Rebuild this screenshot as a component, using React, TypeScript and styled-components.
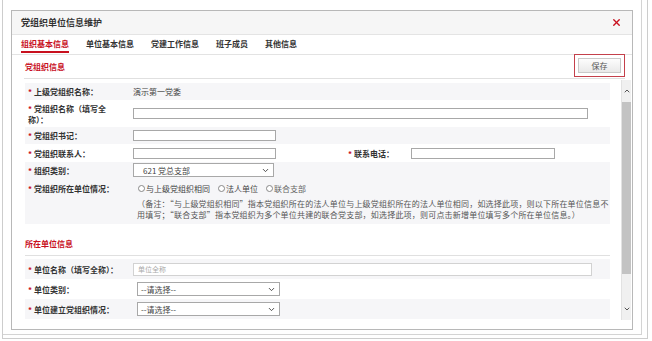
import React from 'react';
import styled, { createGlobalStyle } from 'styled-components';
import { ChevronDown, ChevronUp, X } from 'lucide-react';

const RED = '#c8101e';

const GlobalStyle = createGlobalStyle`
  html, body { margin: 0; padding: 0; background: #fff; }
  body { font-family: "Noto Sans CJK SC", "Noto Sans", sans-serif; color: #333; }
  * { box-sizing: border-box; }
`;

const tabs = ['组织基本信息', '单位基本信息', '党建工作信息', '班子成员', '其他信息'];

export default function App() {
  return (
    <>
      <GlobalStyle />
      <Page>
        <Frame>
          <Dialog>
            <TitleBar>
              <Title>党组织单位信息维护</Title>
              <X size={11} color={RED} strokeWidth={3} />
            </TitleBar>
            <Tabs>
              {tabs.map((t, i) => (
                <Tab key={t} $active={i === 0}>{t}</Tab>
              ))}
            </Tabs>
            <SectionBar>
              <SectionTitle>党组织信息</SectionTitle>
              <SaveFrame>
                <SaveButton>保存</SaveButton>
              </SaveFrame>
            </SectionBar>
            <Body>
              <FormArea>
                <Row $h={17} $shade>
                  <Label><Star>*</Star>上级党组织名称：</Label>
                  <Value>演示第一党委</Value>
                </Row>
                <Row $h={27}>
                  <Label><Star>*</Star>党组织名称（填写全<br />称）：</Label>
                  <TextBox $w={455} />
                </Row>
                <Row $h={17} $shade>
                  <Label><Star>*</Star>党组织书记：</Label>
                  <TextBox $w={143} />
                </Row>
                <Row $h={18}>
                  <Label><Star>*</Star>党组织联系人：</Label>
                  <TextBox $w={143} />
                  <Label $w={66} $gap={69}><Star>*</Star>联系电话：</Label>
                  <TextBox $w={144} />
                </Row>
                <Row $h={16} $shade>
                  <Label><Star>*</Star>组织类别：</Label>
                  <Select $w={141} $pad={9}>
                    <span>621 党总支部</span>
                    <ChevronDown size={9} strokeWidth={2.5} />
                  </Select>
                </Row>
                <Block $shade>
                  <Row $h={20}>
                    <Label><Star>*</Star>党组织所在单位情况：</Label>
                    <Radios>
                      <Radio><Dot />与上级党组织相同</Radio>
                      <Radio><Dot />法人单位</Radio>
                      <Radio $dim><Dot />联合支部</Radio>
                    </Radios>
                  </Row>
                  <Note>
                    （备注：“与上级党组织相同”指本党组织所在的法人单位与上级党组织所在的法人单位相同，如选择此项，则以下所在单位信息不
                    <br />
                    用填写；“联合支部”指本党组织为多个单位共建的联合党支部，如选择此项，则可点击新增单位填写多个所在单位信息。）
                  </Note>
                </Block>
                <SubHeading>所在单位信息</SubHeading>
                <Row $h={20} $shade $top={3}>
                  <Label><Star>*</Star>单位名称（填写全称）：</Label>
                  <TextBox $w={459} $light placeholder="单位全称" />
                </Row>
                <Row $h={20}>
                  <Label><Star>*</Star>单位类别：</Label>
                  <Select $w={143} $pad={3} $gap={4}>
                    <span>--请选择--</span>
                    <ChevronDown size={9} strokeWidth={2.5} />
                  </Select>
                </Row>
                <Row $h={20} $shade>
                  <Label><Star>*</Star>单位建立党组织情况：</Label>
                  <Select $w={143} $pad={3} $gap={4}>
                    <span>--请选择--</span>
                    <ChevronDown size={9} strokeWidth={2.5} />
                  </Select>
                </Row>
              </FormArea>
              <ScrollBar>
                <Arrow><ChevronUp size={8} strokeWidth={3} /></Arrow>
                <Thumb />
                <Track />
                <Arrow><ChevronDown size={8} strokeWidth={3} /></Arrow>
              </ScrollBar>
            </Body>
          </Dialog>
        </Frame>
      </Page>
    </>
  );
}

const Page = styled.div`
  width: 646px;
  height: 340px;
  margin: -1px 0 0 2px;
  border: 1px solid #cdcdcd;
  border-top: none;
`;

const Frame = styled.div`
  width: 639px;
  height: 336px;
  border-right: 1px solid #d4d4d4;
  border-bottom: 1px solid #d4d4d4;
  padding: 11px 0 0 8px;
`;

const Dialog = styled.div`
  width: 622px;
  height: 320px;
  border: 1px solid #b8b8b8;
  background: #fff;
  display: flex;
  flex-direction: column;
`;

const TitleBar = styled.div`
  height: 24px;
  flex-shrink: 0;
  display: flex;
  align-items: center;
  justify-content: space-between;
  padding: 0 10px 0 9px;
  background: #f6f6f6;
  border-bottom: 1px solid #e4e4e4;
`;

const Title = styled.div`
  font-size: 9px;
  font-weight: bold;
  color: #333;
`;

const Tabs = styled.div`
  height: 20px;
  flex-shrink: 0;
  display: flex;
  align-items: flex-end;
  gap: 17px;
  padding-left: 9px;
  border-bottom: 1px solid #e3e3e3;
`;

const Tab = styled.div<{ $active?: boolean }>`
  height: 17px;
  margin-bottom: 1px;
  display: flex;
  align-items: center;
  font-size: 8px;
  font-weight: bold;
  color: ${p => (p.$active ? RED : '#333')};
  border-bottom: 2px solid ${p => (p.$active ? RED : 'transparent')};
`;

const SectionBar = styled.div`
  height: 24px;
  flex-shrink: 0;
  display: flex;
  justify-content: space-between;
  align-items: center;
  margin: 0 7px 0 12px;
  padding-left: 1px;
  border-bottom: 1px solid #e0e0e0;
`;

const SectionTitle = styled.div`
  font-size: 8px;
  font-weight: bold;
  color: ${RED};
`;

const SaveFrame = styled.div`
  height: 23px;
  width: 51px;
  margin-top: -2px;
  border: 1px solid #c4404b;
  display: flex;
  align-items: center;
  justify-content: center;
`;

const SaveButton = styled.div`
  width: 43px;
  height: 15px;
  border: 1px solid #c9c9c9;
  background: linear-gradient(#fdfdfd, #e9e9e9);
  font-size: 8px;
  color: #555;
  display: flex;
  align-items: center;
  justify-content: center;
`;

const Body = styled.div`
  height: 240px;
  flex-shrink: 0;
  display: flex;
  margin: 1px 0 0 8px;
`;

const FormArea = styled.div`
  flex: 1;
  overflow: hidden;
  padding: 3px 11px 0 5px;
`;

const Row = styled.div<{ $h: number; $shade?: boolean; $top?: number }>`
  height: ${p => p.$h}px;
  margin-top: ${p => p.$top ?? 0}px;
  display: flex;
  align-items: center;
  background: ${p => (p.$shade ? '#f6f6f8' : '#fff')};
`;

const Block = styled.div<{ $shade?: boolean }>`
  background: ${p => (p.$shade ? '#f6f6f8' : '#fff')};
  padding-bottom: 4px;
  & > div { background: transparent; }
`;

const Label = styled.div<{ $w?: number; $gap?: number }>`
  width: ${p => p.$w ?? 108}px;
  margin-left: ${p => p.$gap ?? 0}px;
  flex-shrink: 0;
  padding-left: 3px;
  font-size: 8px;
  line-height: 11px;
  font-weight: bold;
  color: #333;
`;

const Star = styled.span`
  color: ${RED};
  margin-right: 2px;
`;

const Value = styled.div`
  font-size: 8px;
  color: #444;
`;

const TextBox = styled.input<{ $w: number; $light?: boolean }>`
  width: ${p => p.$w}px;
  height: ${p => (p.$light ? 13 : 11)}px;
  border: 1px solid ${p => (p.$light ? '#d2d2d2' : '#a8a8a8')};
  padding: 0 4px;
  font-size: 7px;
  font-family: inherit;
  background: #fff;
  outline: none;
  &::placeholder { color: #aaa; }
`;

const Select = styled.div<{ $w: number; $pad: number; $gap?: number }>`
  width: ${p => p.$w}px;
  height: 14px;
  margin-left: ${p => p.$gap ?? 0}px;
  border: 1px solid #a8a8a8;
  background: #fff;
  display: flex;
  align-items: center;
  justify-content: space-between;
  padding: 0 3px 0 ${p => p.$pad}px;
  font-size: 8px;
  color: #444;
`;

const Radios = styled.div`
  display: flex;
  gap: 8px;
  margin-left: 5px;
`;

const Radio = styled.div<{ $dim?: boolean }>`
  display: flex;
  align-items: center;
  gap: 1px;
  font-size: 8px;
  color: ${p => (p.$dim ? '#666' : '#444')};
`;

const Dot = styled.span`
  width: 7px;
  height: 7px;
  border-radius: 50%;
  border: 1px solid #888;
  background: #fff;
`;

const Note = styled.div`
  margin-left: 112px;
  font-size: 8px;
  line-height: 11px;
  letter-spacing: 0.2px;
  color: #555;
  white-space: nowrap;
`;

const SubHeading = styled.div`
  height: 32px;
  display: flex;
  align-items: flex-end;
  padding-bottom: 6px;
  font-size: 8px;
  font-weight: bold;
  color: ${RED};
  border-bottom: 1px solid #e0e0e0;
`;

const ScrollBar = styled.div`
  width: 10px;
  margin-right: 1px;
  display: flex;
  flex-direction: column;
  background: #f0f0f0;
  border-left: 1px solid #e2e2e2;
  color: #555;
`;

const Arrow = styled.div`
  height: 22px;
  display: flex;
  align-items: center;
  justify-content: center;
`;

const Thumb = styled.div`
  height: 172px;
  background: #c3c3c3;
`;

const Track = styled.div`
  flex: 1;
`;
